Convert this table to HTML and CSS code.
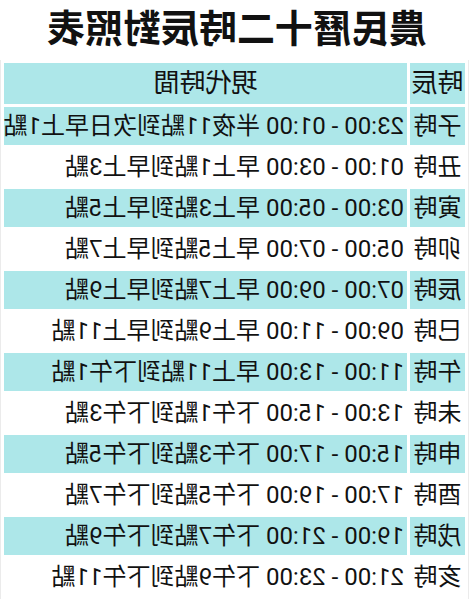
FILE: index.html
```html
<!DOCTYPE html>
<html lang="zh-Hant">
<head>
<meta charset="utf-8">
<link rel="stylesheet" href="styles.css">
</head>
<body>
<div class="page">
  <h1 class="title">農民曆十二時辰對照表</h1>
  <table class="chart">
    <thead>
      <tr class="alt"><th class="name">時辰</th><th class="time">現代時間</th></tr>
    </thead>
    <tbody>
      <tr class="alt"><td class="name">子時</td><td class="time">23:00 - 01:00 半夜11點到次日早上1點</td></tr>
      <tr><td class="name">丑時</td><td class="time">01:00 - 03:00 早上1點到早上3點</td></tr>
      <tr class="alt"><td class="name">寅時</td><td class="time">03:00 - 05:00 早上3點到早上5點</td></tr>
      <tr><td class="name">卯時</td><td class="time">05:00 - 07:00 早上5點到早上7點</td></tr>
      <tr class="alt"><td class="name">辰時</td><td class="time">07:00 - 09:00 早上7點到早上9點</td></tr>
      <tr><td class="name">巳時</td><td class="time">09:00 - 11:00 早上9點到早上11點</td></tr>
      <tr class="alt"><td class="name">午時</td><td class="time">11:00 - 13:00 早上11點到下午1點</td></tr>
      <tr><td class="name">未時</td><td class="time">13:00 - 15:00 下午1點到下午3點</td></tr>
      <tr class="alt"><td class="name">申時</td><td class="time">15:00 - 17:00 下午3點到下午5點</td></tr>
      <tr><td class="name">酉時</td><td class="time">17:00 - 19:00 下午5點到下午7點</td></tr>
      <tr class="alt"><td class="name">戌時</td><td class="time">19:00 - 21:00 下午7點到下午9點</td></tr>
      <tr><td class="name">亥時</td><td class="time">21:00 - 23:00 下午9點到下午11點</td></tr>
    </tbody>
  </table>
</div>
</body>
</html>
```
FILE: styles.css
```css
html, body {
  margin: 0;
  padding: 0;
  background: #ffffff;
}
body {
  width: 474px;
  height: 599px;
  overflow: hidden;
}
.page {
  width: 474px;
  transform: scaleX(-1);
  font-family: Roboto, "Noto Sans CJK TC", sans-serif;
  color: #111111;
}
.title {
  margin: 0;
  padding-top: 5px;
  height: 47px;
  line-height: 42px;
  font-size: 38px;
  font-weight: 700;
  text-align: center;
  font-family: "Noto Sans CJK TC", sans-serif;
}
.chart {
  margin: 8px 0 0 5px;
  border-collapse: separate;
  border-spacing: 3px;
  border: 1px solid #ebebeb;
  border-top: 0;
  width: 469px;
  table-layout: fixed;
}
.chart th, .chart td {
  padding: 0;
  font-size: 24px;
  font-weight: 400;
  white-space: nowrap;
  height: 38px;
  line-height: 38px;
}
.chart thead th {
  height: 41px;
  line-height: 41px;
  font-size: 26px;
}
.chart .name {
  width: 55px;
  text-align: center;
}
.chart td.time {
  text-align: left;
  padding-left: 3px;
}
.chart th.time {
  text-align: center;
}
.chart .alt th, .chart .alt td {
  background: #ade7e9;
}
```
